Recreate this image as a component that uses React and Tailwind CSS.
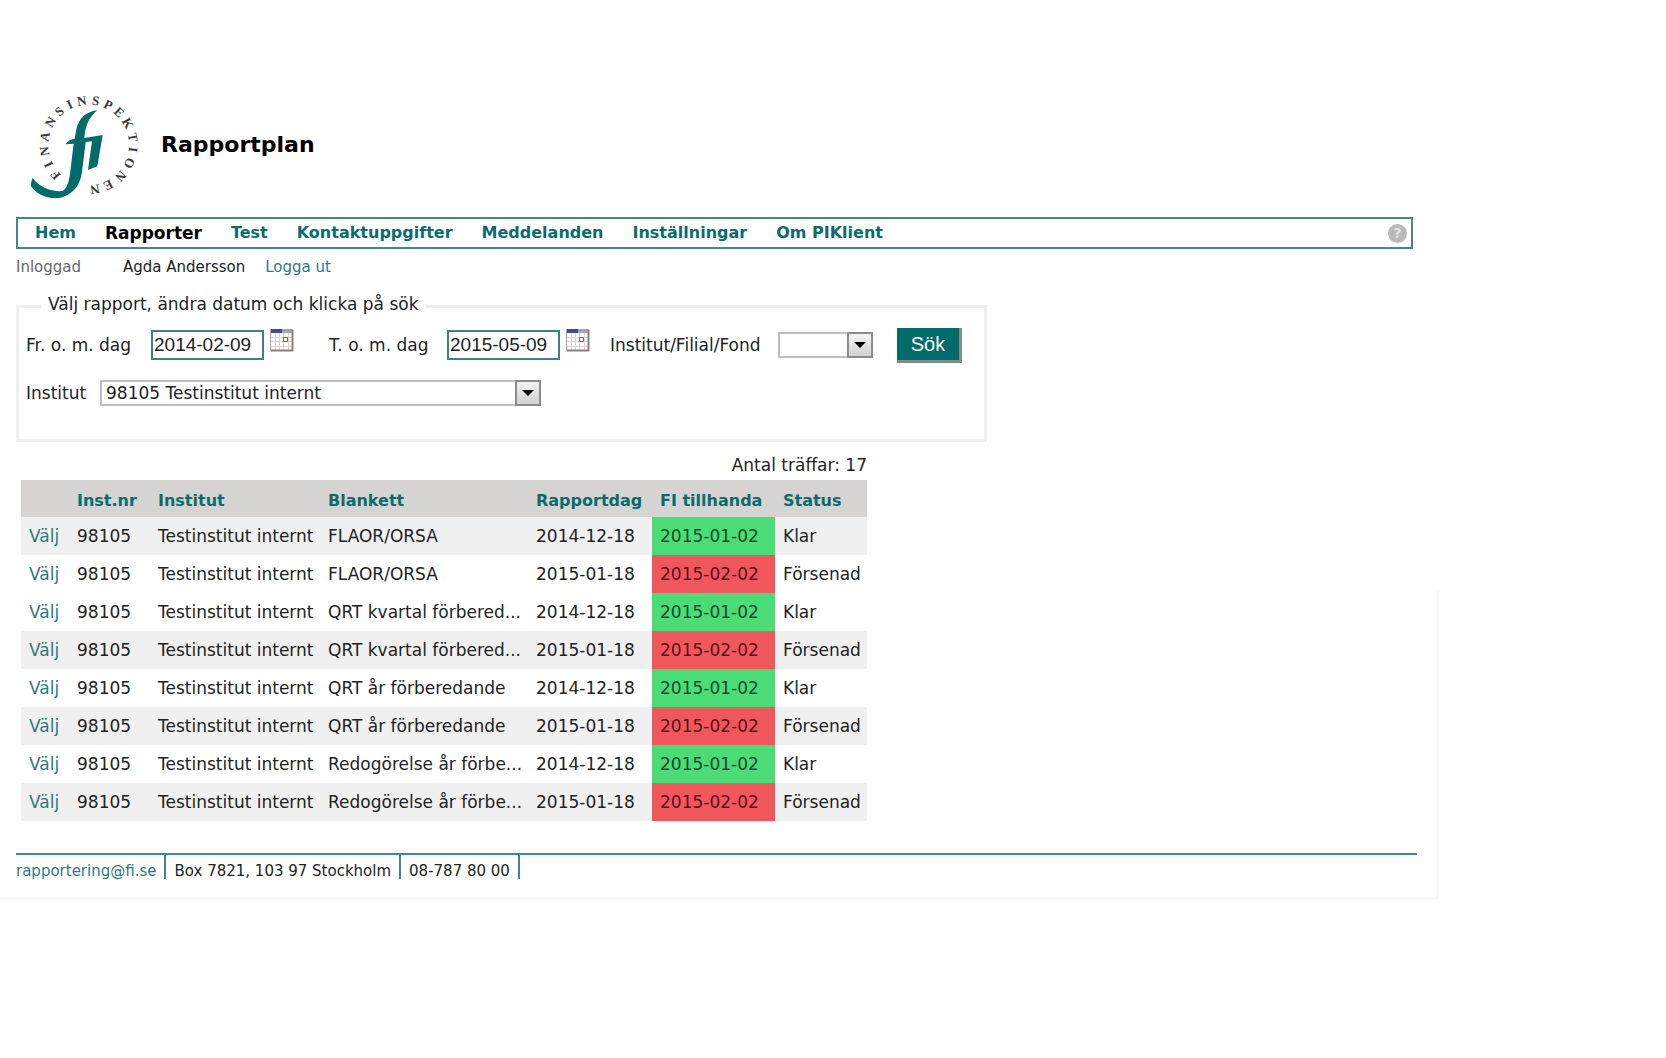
const NAV_ITEMS = [
  { label: 'Hem' },
  { label: 'Rapporter', active: true },
  { label: 'Test' },
  { label: 'Kontaktuppgifter' },
  { label: 'Meddelanden' },
  { label: 'Inställningar' },
  { label: 'Om PIKlient' },
];

const COLUMNS = [
  { label: '', width: 'w-[48px]' },
  { label: 'Inst.nr', width: 'w-[81px]' },
  { label: 'Institut', width: 'w-[170px]' },
  { label: 'Blankett', width: 'w-[208px]' },
  { label: 'Rapportdag', width: 'w-[124px]' },
  { label: 'FI tillhanda', width: 'w-[123px]' },
  { label: 'Status', width: 'w-[92px]' },
];

const FORMS = ['FLAOR/ORSA', 'QRT kvartal förbered...', 'QRT år förberedande', 'Redogörelse år förbe...'];

// Every form is reported twice: once on time and once late
const REPORTS = FORMS.flatMap((form) => [
  { form, reportDay: '2014-12-18', received: '2015-01-02', status: 'Klar' },
  { form, reportDay: '2015-01-18', received: '2015-02-02', status: 'Försenad' },
]);

const SHADED_ROWS = [0, 3, 5, 7];

// Letters of the logo ring with their angle on the circle, in degrees
const RING = [
  ['F', 138], ['I', 154], ['N', 172], ['A', 191], ['N', 211], ['S', 229],
  ['I', 245], ['N', 261], ['S', 279], ['P', 296], ['E', 313], ['K', 331],
  ['T', 350], ['I', 366], ['O', 384], ['N', 404], ['E', 424], ['N', 442],
];

function Logo() {
  return (
    <svg viewBox="90 60 330 330" className="w-[110px] h-[110px]" role="img" aria-label="Finansinspektionen">
      <g fill="#3a3a3a" fontFamily="'Liberation Serif', serif" fontSize="39" fontWeight="bold" textAnchor="middle">
        {RING.map(([letter, angle]) => (
          <text key={angle} transform={`translate(266 225) rotate(${angle + 90}) translate(0 -121)`}>
            {letter}
          </text>
        ))}
      </g>
      <path
        fill="#006b6b"
        d="M292 121C258 124 236 146 229 178L224 206C212 208 203 213 196 223L221 221L210 312C206 340 200 355 188 363C155 366 116 351 98 324C94 330 93 340 93 349C108 371 138 386 172 385C215 378 240 350 246 306L257 216L276 214L264 300L292 289L308 195L253 204C256 168 266 143 292 121Z"
      />
    </svg>
  );
}

function CalendarIcon() {
  return (
    <svg viewBox="0 0 24 24" className="w-6 h-6" fill="none">
      <path fill="#fff" stroke="#aaa5a5" d="M.5 1.5h22v21H.5z" />
      <path stroke="#ddd5d5" d="M5.500 5v17M9.500 5v17M13.500 5v17M18.500 5v17M1 9.500h21M1 13.500h21M1 18.500h21" />
      <path fill="#3f4a94" d="M1 1h11v4H1z" />
      <path fill="#a9a3b5" d="M12 1h11v4H12z" />
      <path stroke="#8a8080" strokeWidth="2" d="M22.500 2v21M1 22.500h22" />
      <path fill="#fff" stroke="#a85050" d="M13.500 9.500h4v4h-4z" />
    </svg>
  );
}

function DateField({ id, label, value, labelWidth }) {
  return (
    <>
      <label htmlFor={id} className={labelWidth}>{label}</label>
      <input
        id={id}
        type="text"
        defaultValue={value}
        className="w-[113px] h-[30px] pl-px border-2 border-[#3f8080] bg-white font-['Liberation_Sans',Arial,sans-serif] text-[19px] text-[#222]"
      />
      <button type="button" aria-label={`Kalender ${label}`} className="ml-1.5 mb-2.5">
        <CalendarIcon />
      </button>
    </>
  );
}

function SelectField({ id, options, className }) {
  return (
    <div className={`relative h-[26px] ${className}`}>
      <select id={id} className="w-full h-full appearance-none border-2 border-[#c0c0c0] bg-white pl-1 pr-7 leading-5">
        {options.map((option) => (
          <option key={option}>{option}</option>
        ))}
      </select>
      <span className="pointer-events-none absolute right-0 top-0 flex h-[26px] w-[26px] items-center justify-center border-2 border-[#8c8c8c] bg-linear-to-b from-[#f5f5f5] to-[#d2d2d2]">
        <svg viewBox="0 0 12 6" className="w-3 h-1.5">
          <path d="M0 0h12L6 6z" />
        </svg>
      </span>
    </div>
  );
}

function SearchForm() {
  return (
    <fieldset className="w-[971px] h-[151px] border-3 border-[#efefef] pl-[7px]">
      <legend className="ml-[15px] pl-[7px] pr-2 pb-1 leading-[26px]">Välj rapport, ändra datum och klicka på sök</legend>
      <div className="flex items-center h-9 mt-1.5">
        <DateField id="from" label="Fr. o. m. dag" value="2014-02-09" labelWidth="w-[125px]" />
        <span className="w-[35px]" />
        <DateField id="to" label="T. o. m. dag" value="2015-05-09" labelWidth="w-[118px]" />
        <label htmlFor="unit" className="ml-5 w-[168px]">Institut/Filial/Fond</label>
        <SelectField id="unit" options={['']} className="w-[95px]" />
        <button
          type="submit"
          className="ml-6 w-[65px] h-[35px] border-r-3 border-b-3 border-[#7f8c8c] bg-[#006b6b] font-['Liberation_Sans',Arial,sans-serif] text-[20px] text-white"
        >
          Sök
        </button>
      </div>
      <div className="flex items-center mt-[17px]">
        <label htmlFor="institute" className="w-[74px]">Institut</label>
        <SelectField id="institute" options={['98105 Testinstitut internt']} className="w-[441px]" />
      </div>
    </fieldset>
  );
}

function ReportTable() {
  return (
    <table className="w-[846px] ml-[5px] table-fixed border-collapse text-left whitespace-nowrap">
      <caption className="h-[38px] pt-1 text-right leading-[38px]">Antal träffar: 17</caption>
      <thead>
        <tr className="h-[37px] bg-[#d6d3d3] text-[16px] text-[#0d6b6b]">
          {COLUMNS.map(({ label, width }) => (
            <th key={label} className={`${width} pl-2 pt-1 font-bold`}>{label}</th>
          ))}
        </tr>
      </thead>
      <tbody>
        {REPORTS.map((report, index) => (
          <tr key={report.form + report.reportDay} className={SHADED_ROWS.includes(index) ? 'h-[38px] bg-[#f0f0f0]' : 'h-[38px]'}>
            <td className="pl-2"><a href="#" className="text-[#2f7a7a]">Välj</a></td>
            <td className="pl-2">98105</td>
            <td className="pl-2">Testinstitut internt</td>
            <td className="pl-2">{report.form}</td>
            <td className="pl-2">{report.reportDay}</td>
            <td className={report.status === 'Klar' ? 'pl-2 bg-[#4bdc78] text-[#0f4d22]' : 'pl-2 bg-[#f0575c] text-[#5c1014]'}>
              {report.received}
            </td>
            <td className="pl-2">{report.status}</td>
          </tr>
        ))}
      </tbody>
    </table>
  );
}

export default function App() {
  return (
    <div className="min-h-screen bg-white pt-[90px] font-['DejaVu_Sans',Verdana,sans-serif] text-[17px] leading-5 text-[#222]">
      <div className="relative max-w-[1439px] border-b-3 border-[#f8f8f8] pl-4 pb-[18px]">
        <span className="absolute right-0 bottom-0 h-[306px] w-[3px] bg-[#f8f8f8]" />

        <header className="flex items-center pl-3.5">
          <Logo />
          <h1 className="ml-[21px] text-[22px] font-bold text-black">Rapportplan</h1>
        </header>

        <nav className="mt-[17px] mr-[26px] flex h-8 items-center gap-[29px] border-2 border-[#4a8585] pl-[17px] pr-1 text-[16px] font-bold text-[#0d6b6b]">
          {NAV_ITEMS.map(({ label, active }) => (
            <a key={label} href="#" className={active ? 'text-[17px] text-black' : ''}>{label}</a>
          ))}
          <button type="button" aria-label="Hjälp" className="ml-auto flex h-[19px] w-[19px] items-center justify-center rounded-full bg-[#b9b9b9] text-[14px] text-[#e2e2e2]">
            ?
          </button>
        </nav>

        <div className="mt-2 flex text-[15px]">
          <span className="w-[107px] text-[#666]">Inloggad</span>
          <span>Agda Andersson</span>
          <a href="#" className="ml-5 text-[#2f7a7a]">Logga ut</a>
        </div>

        <main className="mt-3.5">
          <SearchForm />
          <ReportTable />
        </main>

        <footer className="mt-8 mr-[22px] flex border-t-2 border-[#4a8585] text-[15px]">
          <a href="mailto:rapportering@fi.se" className="h-6 border-r-2 border-[#4a8585] pr-2 pt-1.5 text-[#2f7a7a]">rapportering@fi.se</a>
          <span className="h-6 border-r-2 border-[#4a8585] px-2 pt-1.5">Box 7821, 103 97 Stockholm</span>
          <span className="h-6 border-r-2 border-[#4a8585] px-2 pt-1.5">08-787 80 00</span>
        </footer>
      </div>
    </div>
  );
}
